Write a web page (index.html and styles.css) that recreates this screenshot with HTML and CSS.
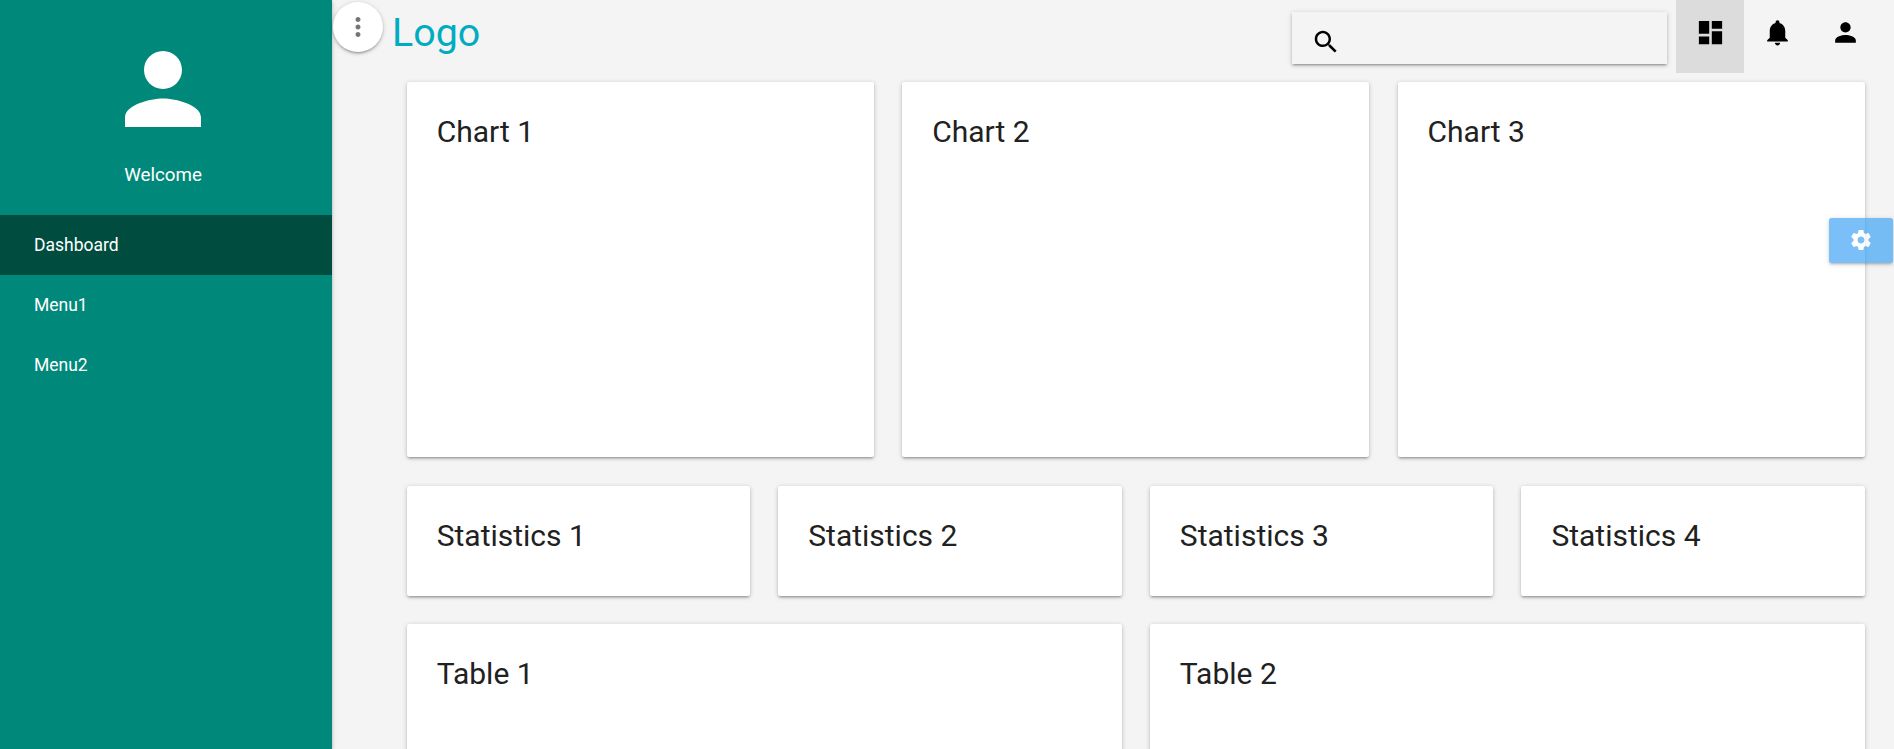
FILE: index.html
```html
<!DOCTYPE html>
<html lang="en">
<head>
<meta charset="utf-8">
<title>Dashboard</title>
<link rel="stylesheet" href="styles.css">
</head>
<body>
<div class="app">
  <aside class="sidebar">
    <div class="profile">
      <svg class="avatar" viewBox="0 0 24 24"><path d="M12 12c2.21 0 4-1.79 4-4s-1.79-4-4-4-4 1.79-4 4 1.79 4 4 4zm0 2c-2.67 0-8 1.34-8 4v2h16v-2c0-2.66-5.33-4-8-4z"/></svg>
      <span class="welcome">Welcome</span>
    </div>
    <nav class="menu">
      <a class="menu-item active">Dashboard</a>
      <a class="menu-item">Menu1</a>
      <a class="menu-item">Menu2</a>
    </nav>
  </aside>
  <main class="main">
    <header class="topbar">
      <button class="toggle" aria-label="Toggle menu"><svg viewBox="0 0 24 24"><path d="M12 8c1.1 0 2-.9 2-2s-.9-2-2-2-2 .9-2 2 .9 2 2 2zm0 2c-1.1 0-2 .9-2 2s.9 2 2 2 2-.9 2-2-.9-2-2-2zm0 6c-1.1 0-2 .9-2 2s.9 2 2 2 2-.9 2-2-.9-2-2-2z"/></svg></button>
      <a class="logo">Logo</a>
      <div class="search"><svg viewBox="0 0 24 24"><path d="M15.5 14h-.79l-.28-.27C15.41 12.59 16 11.11 16 9.5 16 5.91 13.09 3 9.5 3S3 5.91 3 9.5 5.91 16 9.5 16c1.61 0 3.09-.59 4.23-1.57l.27.28v.79l5 4.99L20.49 19l-4.99-5zm-6 0C7.01 14 5 11.99 5 9.5S7.01 5 9.5 5 14 7.01 14 9.5 11.99 14 9.5 14z"/></svg></div>
      <div class="actions">
        <a class="action active"><svg viewBox="0 0 24 24"><path d="M3 13h8V3H3v10zm0 8h8v-6H3v6zm10 0h8V11h-8v10zm0-18v6h8V3h-8z"/></svg></a>
        <a class="action"><svg viewBox="0 0 24 24"><path d="M12 22c1.1 0 2-.9 2-2h-4c0 1.1.89 2 2 2zm6-6v-5c0-3.07-1.64-5.64-4.5-6.32V4c0-.83-.67-1.5-1.5-1.5s-1.5.67-1.5 1.5v.68C7.63 5.36 6 7.92 6 11v5l-2 2v1h16v-1l-2-2z"/></svg></a>
        <a class="action"><svg viewBox="0 0 24 24"><path d="M12 12c2.21 0 4-1.79 4-4s-1.79-4-4-4-4 1.79-4 4 1.79 4 4 4zm0 2c-2.67 0-8 1.34-8 4v2h16v-2c0-2.66-5.33-4-8-4z"/></svg></a>
      </div>
    </header>
    <div class="content">
      <section class="row charts">
        <div class="card"><span class="card-title">Chart 1</span></div>
        <div class="card"><span class="card-title">Chart 2</span></div>
        <div class="card"><span class="card-title">Chart 3</span></div>
      </section>
      <section class="row stats">
        <div class="card"><span class="card-title">Statistics 1</span></div>
        <div class="card"><span class="card-title">Statistics 2</span></div>
        <div class="card"><span class="card-title">Statistics 3</span></div>
        <div class="card"><span class="card-title">Statistics 4</span></div>
      </section>
      <section class="row tables">
        <div class="card"><span class="card-title">Table 1</span></div>
        <div class="card"><span class="card-title">Table 2</span></div>
      </section>
    </div>
  </main>
  <button class="settings" aria-label="Settings"><svg viewBox="0 0 24 24"><path d="M19.43 12.98c.04-.32.07-.64.07-.98s-.03-.66-.07-.98l2.11-1.65c.19-.15.24-.42.12-.64l-2-3.46c-.12-.22-.39-.3-.61-.22l-2.49 1c-.52-.4-1.08-.73-1.69-.98l-.38-2.65C14.46 2.18 14.25 2 14 2h-4c-.25 0-.46.18-.49.42l-.38 2.65c-.61.25-1.17.59-1.69.98l-2.49-1c-.23-.09-.49 0-.61.22l-2 3.46c-.13.22-.07.49.12.64l2.11 1.65c-.04.32-.07.65-.07.98s.03.66.07.98l-2.11 1.65c-.19.15-.24.42-.12.64l2 3.46c.12.22.39.3.61.22l2.49-1c.52.4 1.08.73 1.69.98l.38 2.65c.03.24.24.42.49.42h4c.25 0 .46-.18.49-.42l.38-2.65c.61-.25 1.17-.59 1.69-.98l2.49 1c.23.09.49 0 .61-.22l2-3.46c.12-.22.07-.49-.12-.64l-2.11-1.65zM12 15.5c-1.93 0-3.5-1.57-3.5-3.5s1.57-3.5 3.5-3.5 3.5 1.57 3.5 3.5-1.57 3.5-3.5 3.5z"/></svg></button>
</div>
</body>
</html>
```
FILE: styles.css
```css
:root {
  --depth: 0 2px 2px 0 rgba(0, 0, 0, .14), 0 3px 1px -2px rgba(0, 0, 0, .12), 0 1px 5px 0 rgba(0, 0, 0, .2);
}
* { box-sizing: border-box; }
body {
  margin: 0;
  background: #f4f4f4;
  color: #212121;
  font-family: Roboto, "Liberation Sans", sans-serif;
}
svg { display: block; fill: currentColor; }
button { border: 0; padding: 0; }
.app {
  display: flex;
  height: 749px;
  overflow: hidden;
  position: relative;
}
.sidebar {
  flex: 0 0 332px;
  background: #00897b;
  color: #fff;
  box-shadow: var(--depth);
}
.profile {
  height: 215px;
  padding: 31.5px 6px 0 0;
  display: flex;
  flex-direction: column;
  align-items: center;
}
.avatar { width: 114px; height: 114px; }
.welcome {
  margin-top: 17.5px;
  font-size: 18.75px;
  line-height: 24px;
}
.menu { display: flex; flex-direction: column; }
.menu-item {
  height: 60px;
  padding-left: 34px;
  font-size: 17.5px;
  line-height: 60px;
}
.menu-item.active { background: #004d40; }
.main { flex: 1; min-width: 0; }
.topbar {
  display: flex;
  align-items: flex-start;
  height: 82px;
  padding-right: 15px;
}
.toggle {
  width: 50px;
  height: 50px;
  margin: 2px 0 0 1px;
  border-radius: 50%;
  background: #fff;
  color: #757575;
  display: grid;
  place-items: center;
  box-shadow: var(--depth);
}
.toggle svg { width: 30px; height: 30px; }
.logo {
  margin-left: 9px;
  color: #00acc1;
  font-size: 39.4px;
  line-height: 65px;
}
.search {
  width: 375px;
  height: 52px;
  margin: 12px 9px 0 auto;
  padding: 15px 0 0 19px;
  color: #000;
  box-shadow: var(--depth);
}
.search svg { width: 30px; height: 30px; }
.actions { display: flex; }
.action {
  width: 67.6px;
  height: 73px;
  padding-top: 17px;
  display: flex;
  justify-content: center;
  color: #000;
}
.action.active { background: #dcdcdc; }
.action svg { width: 31px; height: 31px; }
.content {
  display: flex;
  flex-direction: column;
  gap: 28px;
  padding: 0 29.2px 0 74.7px;
}
.row { display: grid; gap: 28.2px; }
.charts { grid-template-columns: repeat(3, 1fr); height: 376px; padding-bottom: 1px; }
.stats { grid-template-columns: repeat(4, 1fr); height: 110px; }
.tables { grid-template-columns: repeat(2, 1fr); height: 376px; }
.card {
  background: #fff;
  border-radius: 2.5px;
  padding: 30px;
  box-shadow: var(--depth);
}
.card-title {
  display: block;
  font-size: 30px;
  font-weight: 400;
  line-height: 40px;
}
.settings {
  position: absolute;
  top: 218px;
  right: 1px;
  width: 64px;
  height: 45px;
  border-radius: 2.5px;
  background: #42a5f5;
  color: #fff;
  opacity: .7;
  display: grid;
  place-items: center;
  padding-bottom: 1px;
  box-shadow: var(--depth);
}
.settings svg { width: 24px; height: 24px; }
```
